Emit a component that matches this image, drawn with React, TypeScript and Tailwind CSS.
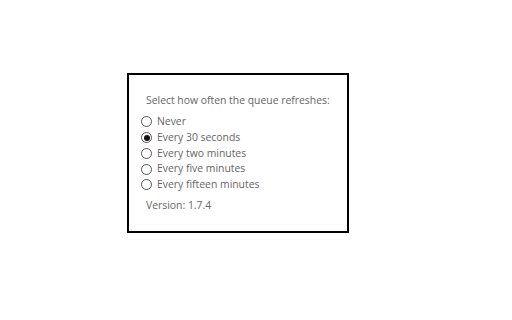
import { useState } from "react";

const options = [
  { value: "never", label: "Never" },
  { value: "30s", label: "Every 30 seconds" },
  { value: "2m", label: "Every two minutes" },
  { value: "5m", label: "Every five minutes" },
  { value: "15m", label: "Every fifteen minutes" },
];

export default function App() {
  const [selected, setSelected] = useState("30s");

  return (
    <div className="w-[512px] h-[320px] bg-white pt-[73px] pl-[127px] font-['Open_Sans',sans-serif]">
      <div className="w-[222px] h-[160px] border-2 border-black pl-[12px] pt-[18px]">
        <p className="pl-[5px] text-[10.4px] leading-[14px] text-[#666]">
          Select how often the queue refreshes:
        </p>

        <div className="mt-[7px] flex flex-col">
          {options.map((o) => (
            <label
              key={o.value}
              className="flex items-center h-[15.75px] gap-[5px] text-[10.4px] text-[#666]"
            >
              <span className="w-[11px] h-[11px] rounded-full border border-[#555] bg-white flex items-center justify-center">
                {selected === o.value && (
                  <span className="w-[6px] h-[6px] rounded-full bg-[#111]" />
                )}
              </span>
              <input
                type="radio"
                name="refresh"
                className="hidden"
                checked={selected === o.value}
                onChange={() => setSelected(o.value)}
              />
              {o.label}
            </label>
          ))}
        </div>

        <p className="pl-[5px] mt-[5px] text-[10.4px] leading-[14px] text-[#666]">
          Version: 1.7.4
        </p>
      </div>
    </div>
  );
}
